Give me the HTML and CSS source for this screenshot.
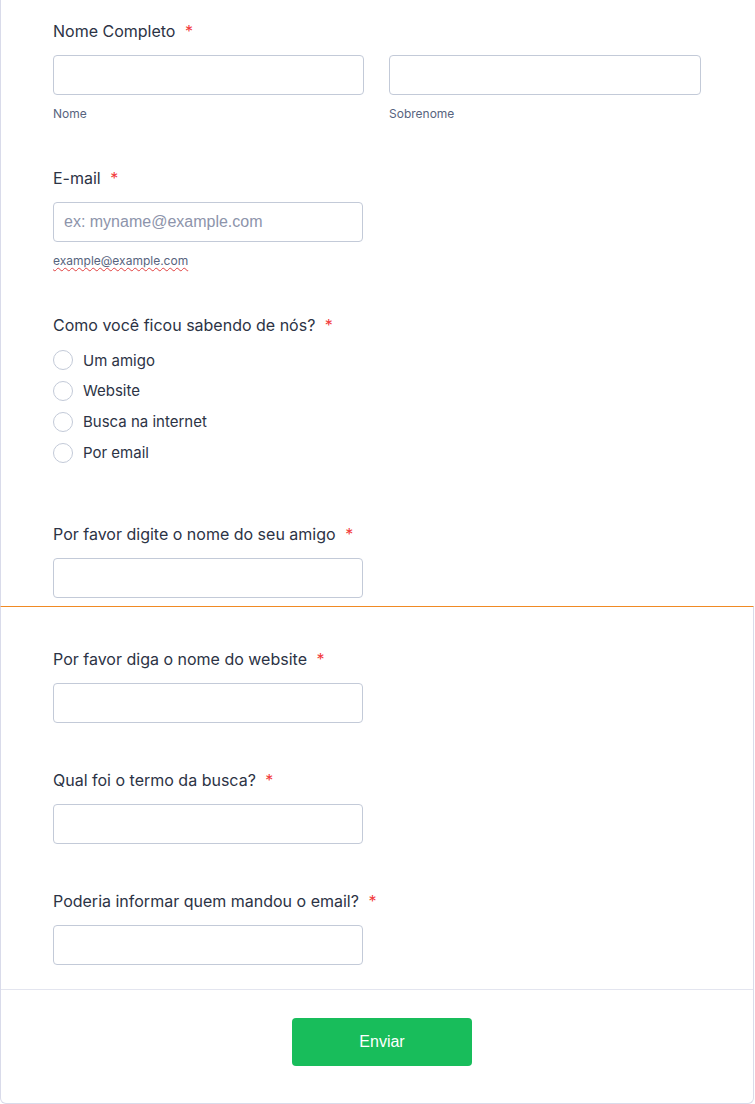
FILE: index.html
```html
<!DOCTYPE html>
<html lang="pt-BR">
<head>
    <meta charset="UTF-8">
    <meta name="viewport" content="width=device-width, initial-scale=1.0">
    <title>Formulário</title>
    <link rel="stylesheet" href="styles.css">
</head>
<body>
    <form class="form">
        <div class="form-top">
            <div class="field">
                <label class="field-label">Nome Completo <span class="required">*</span></label>
                <div class="name-row">
                    <div>
                        <input type="text" class="text-input" id="nome">
                        <div class="sublabel">Nome</div>
                    </div>
                    <div>
                        <input type="text" class="text-input" id="sobrenome">
                        <div class="sublabel">Sobrenome</div>
                    </div>
                </div>
            </div>

            <div class="field gap-46">
                <label class="field-label" for="email">E-mail <span class="required">*</span></label>
                <input type="email" class="text-input single" id="email" placeholder="ex: myname@example.com">
                <div class="sublabel"><span class="spell">example@example.com</span></div>
            </div>

            <div class="field gap-46">
                <label class="field-label">Como você ficou sabendo de nós? <span class="required">*</span></label>
                <div class="radio-list">
                    <label class="radio-row"><span class="radio"></span>Um amigo</label>
                    <label class="radio-row"><span class="radio"></span>Website</label>
                    <label class="radio-row"><span class="radio"></span>Busca na internet</label>
                    <label class="radio-row"><span class="radio"></span>Por email</label>
                </div>
            </div>

            <div class="field gap-56">
                <label class="field-label" for="amigo">Por favor digite o nome do seu amigo <span class="required">*</span></label>
                <input type="text" class="text-input single" id="amigo">
            </div>
        </div>

        <div class="form-card">
            <div class="card-body">
                <div class="field">
                    <label class="field-label" for="website">Por favor diga o nome do website <span class="required">*</span></label>
                    <input type="text" class="text-input single" id="website">
                </div>

                <div class="field gap-47">
                    <label class="field-label" for="busca">Qual foi o termo da busca? <span class="required">*</span></label>
                    <input type="text" class="text-input single" id="busca">
                </div>

                <div class="field gap-47">
                    <label class="field-label" for="remetente">Poderia informar quem mandou o email? <span class="required">*</span></label>
                    <input type="text" class="text-input single" id="remetente">
                </div>
            </div>

            <div class="card-footer">
                <button type="submit" class="submit-btn">Enviar</button>
            </div>
        </div>
    </form>
</body>
</html>
```

FILE: styles.css
```css
body {
    margin: 0;
    font-family: Inter, "Noto Sans", sans-serif;
    color: #2c3345;
    background: #fff;
}
.form {
    width: 755px;
}
.form-top {
    border-left: 1px solid #d9dbea;
    padding: 21px 0 8px 52px;
}
.field-label {
    display: block;
    font-size: 16px;
    line-height: 20px;
    font-weight: 400;
    color: #2c3345;
    margin-bottom: 14px;
}
.required {
    color: #f23a3c;
    margin-left: 5px;
}
.gap-46 {
    margin-top: 46px;
}
.gap-47 {
    margin-top: 47px;
}
.gap-56 {
    margin-top: 56px;
}
.name-row {
    display: grid;
    grid-template-columns: 311px 312px;
    gap: 25px;
}
.text-input {
    display: block;
    box-sizing: border-box;
    width: 100%;
    height: 40px;
    border: 1px solid #c3cad8;
    border-radius: 4px;
    padding: 0 10px;
    font-family: "Liberation Sans", Arial, sans-serif;
    font-size: 16px;
    color: #2c3345;
    background: #fff;
}
.text-input.single {
    width: 310px;
}
.text-input::placeholder {
    color: #8d94ab;
}
.sublabel {
    margin-top: 11px;
    font-size: 12px;
    line-height: 16px;
    color: #57647e;
}
.spell {
    text-decoration: underline wavy #e04040;
    text-decoration-thickness: 1px;
    text-underline-offset: 2px;
}
.radio-list {
    margin-top: -4px;
}
.radio-row {
    display: flex;
    align-items: center;
    height: 31px;
    font-size: 15px;
    color: #2c3345;
}
.radio-row:first-child {
    height: 30px;
}
.radio {
    box-sizing: border-box;
    width: 20px;
    height: 20px;
    border: 1px solid #c3cad8;
    border-radius: 50%;
    margin-right: 10px;
}
.form-card {
    width: 754px;
    box-sizing: border-box;
    border: 1px solid #d9dbea;
    border-top: 1px solid #f08a24;
    border-radius: 0 0 6px 6px;
}
.card-body {
    padding: 42px 0 24px 52px;
}
.card-footer {
    border-top: 1px solid #e3e5ef;
    padding: 28px 0 37px 10px;
    text-align: center;
}
.submit-btn {
    width: 180px;
    height: 48px;
    border: none;
    border-radius: 4px;
    background: #18bd5b;
    color: #fff;
    font-family: "Liberation Sans", Arial, sans-serif;
    font-size: 16px;
    cursor: pointer;
}
```
